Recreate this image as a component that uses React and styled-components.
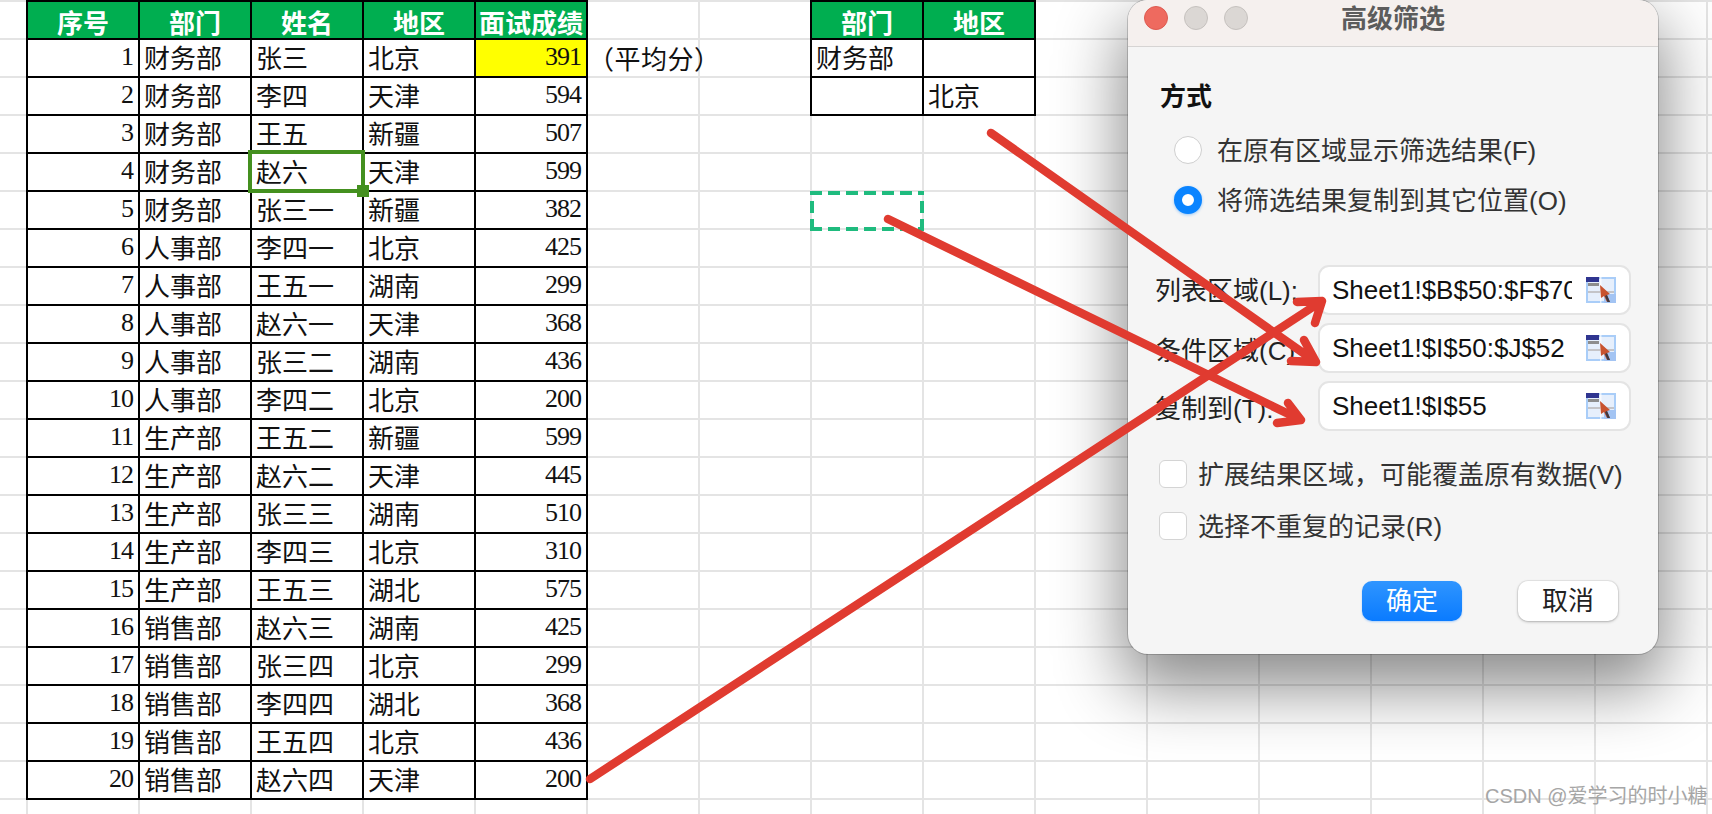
import React from "react";
import styled, { createGlobalStyle } from "styled-components";

const Global = createGlobalStyle`
  html, body { margin: 0; padding: 0; background: #fff; }
  * { box-sizing: border-box; }
`;

const SERIF = `"Liberation Serif", "Noto Sans CJK SC", serif`;
const UI = `"Liberation Sans", "Noto Sans CJK SC", sans-serif`;

const Sheet = styled.div`
  position: relative;
  width: 1712px;
  height: 814px;
  overflow: hidden;
  display: flex;
  align-items: flex-start;
  padding-left: 26px;
  background-color: #fff;
  background-image: linear-gradient(#e4e4e4 2px, transparent 2px),
    linear-gradient(90deg, #e4e4e4 2px, transparent 2px);
  background-size: 112px 38px;
  background-position: 26px 0;
  font-family: ${SERIF};
  color: #111;
`;

const Table = styled.div`
  display: grid;
  grid-template-columns: repeat(${(p) => p.$cols}, 112px);
  grid-auto-rows: 38px;
  border-top: 2px solid #000;
  border-left: 2px solid #000;
  background: #fff;
  flex: none;
`;

const Cell = styled.div`
  position: relative;
  z-index: ${(p) => (p.$selected ? 1 : "auto")};
  display: flex;
  align-items: center;
  justify-content: ${(p) => (p.$num ? "flex-end" : "flex-start")};
  padding: ${(p) => (p.$num ? "0 5px 3px 0" : "3px 0 0 4px")};
  border-right: 2px solid #000;
  border-bottom: 2px solid #000;
  font-size: 26px;
  line-height: 36px;
  white-space: nowrap;
  letter-spacing: ${(p) => (p.$num ? "-1px" : "0")};
  background: ${(p) => (p.$hl ? "#ffff00" : "transparent")};
`;

const HeadCell = styled.div`
  display: flex;
  align-items: center;
  justify-content: center;
  padding-top: 2px;
  border-right: 2px solid #000;
  border-bottom: 2px solid #000;
  background: #00ae50;
  color: #fff;
  font-size: 26px;
  font-weight: 700;
  white-space: nowrap;
`;

const Selection = styled.span`
  position: absolute;
  left: -4px;
  top: -4px;
  right: -3px;
  bottom: -3px;
  border: 4px solid #44901f;
  &::after {
    content: "";
    position: absolute;
    right: -8px;
    bottom: -8px;
    width: 12px;
    height: 12px;
    background: #44901f;
  }
`;

const NoteColumn = styled.div`
  flex: none;
  width: 222px;
  padding-top: 43px;
  font-size: 26px;
  line-height: 36px;
  text-spacing-trim: space-all;
  letter-spacing: 0.5px;
`;

const RightColumn = styled.div`
  flex: none;
  display: flex;
  flex-direction: column;
`;

const DashedBox = styled.div`
  margin-top: 75px;
  width: 114px;
  height: 40px;
  background-image:
    repeating-linear-gradient(90deg, #1fbb7e 0 12px, transparent 12px 18px),
    repeating-linear-gradient(90deg, #1fbb7e 0 12px, transparent 12px 18px),
    repeating-linear-gradient(0deg, #1fbb7e 0 12px, transparent 12px 18px),
    repeating-linear-gradient(0deg, #1fbb7e 0 12px, transparent 12px 18px);
  background-size: 100% 4px, 100% 4px, 4px 100%, 4px 100%;
  background-position: 0 0, 0 100%, 0 0, 100% 0;
  background-repeat: no-repeat;
`;

const Dialog = styled.div`
  position: absolute;
  left: 1128px;
  top: 0;
  width: 530px;
  height: 654px;
  border-radius: 20px;
  background: #f5f5f5;
  box-shadow: 0 0 0 1px rgba(0, 0, 0, 0.18), 0 28px 66px 6px rgba(0, 0, 0, 0.46);
  font-family: ${UI};
  overflow: hidden;
`;

const TitleBar = styled.div`
  position: relative;
  height: 47px;
  display: flex;
  align-items: center;
  justify-content: center;
  padding-bottom: 8px;
  background: #f5f0ee;
  border-bottom: 1.5px solid #d6d4d3;
`;

const Lights = styled.div`
  position: absolute;
  left: 16px;
  top: 6px;
  display: flex;
  gap: 16px;
`;

const Light = styled.span`
  width: 24px;
  height: 24px;
  border-radius: 50%;
  background: ${(p) => (p.$red ? "#ee6a5f" : "#dbd7d4")};
  border: 1px solid ${(p) => (p.$red ? "#dd5a50" : "#c5c1be")};
`;

const Title = styled.div`
  font-size: 26px;
  font-weight: 700;
  color: #5c5c5c;
  line-height: 36px;
`;

const Body = styled.div`
  padding: 32px 27px 0;
`;

const GroupTitle = styled.div`
  margin-left: 5px;
  font-size: 26px;
  font-weight: 700;
  line-height: 36px;
  color: #111;
`;

const RadioRow = styled.label`
  display: flex;
  align-items: center;
  height: 50px;
  margin-left: 19px;
  gap: 15px;
  font-size: 26px;
  color: #333;
  white-space: nowrap;
  &:first-of-type {
    margin-top: 10px;
  }
`;

const RowText = styled.span`
  padding-bottom: 4px;
`;

const Radio = styled.span`
  flex: none;
  width: 28px;
  height: 28px;
  border-radius: 50%;
  background: #fff;
  border: ${(p) => (p.$on ? "8px solid #0a84ff" : "1px solid #cfcfcf")};
  box-shadow: ${(p) => (p.$on ? "0 1px 3px rgba(10,132,255,.4)" : "none")};
`;

const Fields = styled.div`
  margin-top: 40px;
  display: flex;
  flex-direction: column;
  gap: 8px;
`;

const FieldRow = styled.div`
  display: flex;
  align-items: center;
  height: 50px;
`;

const FieldLabel = styled.span`
  flex: none;
  width: 163px;
  padding-bottom: ${(p) => (p.$raise ? "4px" : "0")};
  font-size: 26px;
  color: #222;
  white-space: nowrap;
`;

const Field = styled.div`
  flex: none;
  width: 313px;
  height: 50px;
  display: flex;
  align-items: center;
  padding-left: 12px;
  background: #fff;
  border: 2px solid #e4e4e4;
  border-radius: 11px;
`;

const FieldValue = styled.span`
  flex: none;
  width: 240px;
  overflow: hidden;
  font-size: 26px;
  line-height: 46px;
  color: #111;
  white-space: nowrap;
`;

const PickIcon = styled.svg`
  flex: none;
  margin-left: 14px;
`;

const Checks = styled.div`
  margin-top: 17px;
  margin-left: 4px;
`;

const CheckRow = styled.label`
  display: flex;
  align-items: center;
  height: 52px;
  gap: 11px;
  font-size: 26px;
  color: #333;
  white-space: nowrap;
`;

const Check = styled.span`
  flex: none;
  width: 28px;
  height: 28px;
  border-radius: 6px;
  background: #fff;
  border: 1px solid #d4d4d4;
`;

const Actions = styled.div`
  margin-top: 29px;
  padding-right: 13px;
  display: flex;
  justify-content: flex-end;
  gap: 56px;
`;

const Button = styled.button`
  width: 100px;
  height: 40px;
  padding: 0;
  border: none;
  border-radius: 10px;
  font-family: ${UI};
  font-size: 26px;
  line-height: 40px;
  color: ${(p) => (p.$primary ? "#fff" : "#222")};
  background: ${(p) => (p.$primary ? "linear-gradient(#2f95ff, #0a7bff)" : "#fff")};
  box-shadow: ${(p) => (p.$primary ? "0 1px 2px rgba(10,123,255,.3)" : "0 0 0 1px rgba(0,0,0,.05), 0 1px 3px rgba(0,0,0,.25)")};
`;

const Arrows = styled.svg`
  position: absolute;
  left: 0;
  top: 0;
  pointer-events: none;
`;

const Watermark = styled.div`
  position: absolute;
  left: 1485px;
  top: 782px;
  font-family: ${UI};
  font-size: 20px;
  line-height: 28px;
  color: #a6a6a6;
  white-space: nowrap;
`;

const HEAD = ["序号", "部门", "姓名", "地区", "面试成绩"];
const ROWS = [
  ["财务部", "张三", "北京", 391], ["财务部", "李四", "天津", 594], ["财务部", "王五", "新疆", 507],
  ["财务部", "赵六", "天津", 599], ["财务部", "张三一", "新疆", 382], ["人事部", "李四一", "北京", 425],
  ["人事部", "王五一", "湖南", 299], ["人事部", "赵六一", "天津", 368], ["人事部", "张三二", "湖南", 436],
  ["人事部", "李四二", "北京", 200], ["生产部", "王五二", "新疆", 599], ["生产部", "赵六二", "天津", 445],
  ["生产部", "张三三", "湖南", 510], ["生产部", "李四三", "北京", 310], ["生产部", "王五三", "湖北", 575],
  ["销售部", "赵六三", "湖南", 425], ["销售部", "张三四", "北京", 299], ["销售部", "李四四", "湖北", 368],
  ["销售部", "王五四", "北京", 436], ["销售部", "赵六四", "天津", 200],
];
const FIELDS = [
  ["列表区域(L):", "Sheet1!$B$50:$F$70"],
  ["条件区域(C):", "Sheet1!$I$50:$J$52"],
  ["复制到(T):", "Sheet1!$I$55"],
];

function Pick() {
  return (
    <PickIcon width="30" height="26" viewBox="0 0 30 26">
      <rect width="30" height="26" fill="#a9cdf8" />
      <rect x="2" y="2" width="26" height="22" fill="#e6effc" />
      <rect x="0" y="0" width="13" height="5" fill="#2f3590" />
      <rect x="2" y="6" width="11" height="3" fill="#8d8d8d" />
      <rect x="2" y="14" width="26" height="2" fill="#c4c4c8" />
      <rect x="14" y="0" width="1.5" height="26" fill="#fff" opacity="0.7" />
      <rect x="18" y="17" width="12" height="9" fill="#a3c4f3" />
      <path d="M14 8 L24 17 L21 18 L24 25 L21 25 L18 19 L15 21 Z" fill="#c8532f" />
      <path d="M19 19 L21.5 25 L24 25 L21 18 Z" fill="#3a3a44" />
    </PickIcon>
  );
}

export default function App() {
  return (
    <Sheet>
      <Global />
      <Table $cols={5}>
        {HEAD.map((h) => <HeadCell key={h}>{h}</HeadCell>)}
        {ROWS.map((r, i) => (
          <React.Fragment key={i}>
            <Cell $num>{i + 1}</Cell>
            <Cell>{r[0]}</Cell>
            <Cell $selected={i === 3}>{r[1]}{i === 3 && <Selection />}</Cell>
            <Cell>{r[2]}</Cell>
            <Cell $num $hl={i === 0}>{r[3]}</Cell>
          </React.Fragment>
        ))}
      </Table>
      <NoteColumn>（平均分）</NoteColumn>
      <RightColumn>
        <Table $cols={2}>
          <HeadCell>部门</HeadCell>
          <HeadCell>地区</HeadCell>
          <Cell>财务部</Cell>
          <Cell />
          <Cell />
          <Cell>北京</Cell>
        </Table>
        <DashedBox />
      </RightColumn>

      <Dialog>
        <TitleBar>
          <Lights>
            <Light $red />
            <Light />
            <Light />
          </Lights>
          <Title>高级筛选</Title>
        </TitleBar>
        <Body>
          <GroupTitle>方式</GroupTitle>
          <RadioRow><Radio /><RowText>在原有区域显示筛选结果(F)</RowText></RadioRow>
          <RadioRow><Radio $on /><RowText>将筛选结果复制到其它位置(O)</RowText></RadioRow>
          <Fields>
            {FIELDS.map(([label, value], i) => (
              <FieldRow key={label}>
                <FieldLabel $raise={i === 0}>{label}</FieldLabel>
                <Field>
                  <FieldValue>{value}</FieldValue>
                  <Pick />
                </Field>
              </FieldRow>
            ))}
          </Fields>
          <Checks>
            <CheckRow><Check /><RowText>扩展结果区域，可能覆盖原有数据(V)</RowText></CheckRow>
            <CheckRow><Check /><RowText>选择不重复的记录(R)</RowText></CheckRow>
          </Checks>
          <Actions>
            <Button $primary>确定</Button>
            <Button>取消</Button>
          </Actions>
        </Body>
      </Dialog>

      <Arrows width="1712" height="814" viewBox="0 0 1712 814" fill="none" stroke="#e03b30" strokeWidth="8.5" strokeLinecap="round" strokeLinejoin="round">
        <path d="M991 133 L1316 362 M1304 340 L1316 362 L1291 361" />
        <path d="M888 219 L1301 420 M1288 403 L1301 420 L1277 423" />
        <path d="M590 779 L1322 301 M1297 302 L1322 301 L1315 323" />
      </Arrows>
      <Watermark>CSDN @爱学习的时小糖</Watermark>
    </Sheet>
  );
}
